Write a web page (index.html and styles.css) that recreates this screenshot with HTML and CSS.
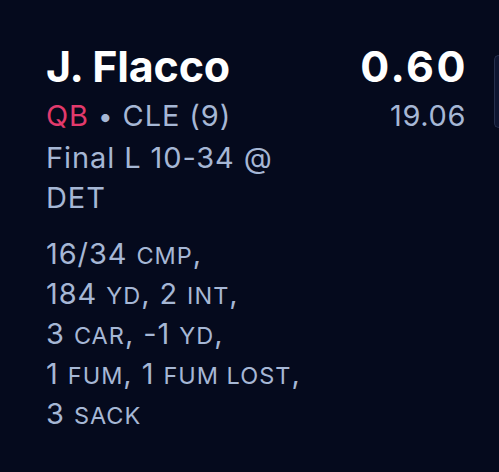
FILE: index.html
```html
<!DOCTYPE html>
<html>
<head>
<meta charset="utf-8">
<link rel="stylesheet" href="styles.css">
</head>
<body>
<div class="track">
  <div class="card">
    <div class="info">
      <div class="name">J. Flacco</div>
      <div class="meta"><span class="pos">QB</span> <span class="dot">•</span> CLE (9)</div>
      <div class="game">
        <span class="line">Final L 10-34 @</span>
        <span class="line">DET</span>
      </div>
      <div class="stats">
        <span class="line">16/34 <span class="sc">CMP</span>,</span>
        <span class="line">184 <span class="sc">YD</span>, 2 <span class="sc">INT</span>,</span>
        <span class="line">3 <span class="sc">CAR</span>, -1 <span class="sc">YD</span>,</span>
        <span class="line">1 <span class="sc">FUM</span>, 1 <span class="sc">FUM LOST</span>,</span>
        <span class="line">3 <span class="sc">SACK</span></span>
      </div>
    </div>
    <div class="score">
      <div class="points">0.60</div>
      <div class="proj">19.06</div>
    </div>
  </div>
  <div class="peek"></div>
</div>
</body>
</html>
```

FILE: styles.css
```css
html, body {
  margin: 0;
  padding: 0;
  background: #050a1d;
  overflow: hidden;
}
body {
  width: 499px;
  height: 472px;
  font-family: Inter, "Noto Sans", sans-serif;
}
.track {
  display: flex;
  gap: 8px;
  overflow: hidden;
}
.card {
  flex: 0 0 486px;
  box-sizing: border-box;
  display: flex;
  justify-content: space-between;
  padding: 41px 20px 0 46px;
}
.name {
  font-size: 43px;
  line-height: 50px;
  font-weight: 700;
  color: #ffffff;
  letter-spacing: -0.2px;
}
.meta, .game, .stats, .proj {
  font-size: 29px;
  line-height: 40px;
  color: #a6b7d5;
  letter-spacing: 0.9px;
}
.meta {
  margin-top: 5px;
  margin-bottom: 2px;
}
.pos {
  color: #e23a6c;
}
.dot {
  font-size: 26px;
  line-height: 1;
}
.line {
  display: block;
  white-space: nowrap;
}
.stats {
  margin-top: 16px;
}
.sc {
  font-size: 23.5px;
  line-height: 1;
  letter-spacing: 1px;
}
.score {
  text-align: right;
}
.points {
  font-size: 43px;
  line-height: 50px;
  font-weight: 700;
  color: #ffffff;
  letter-spacing: 2.5px;
  margin-right: -2px;
}
.proj {
  margin-top: 5px;
  letter-spacing: 0.6px;
  margin-right: 0;
}
.peek {
  flex: 0 0 5px;
  height: 73px;
  margin-top: 55px;
  box-sizing: border-box;
  background: #0e1530;
  border: 1px solid #262f4c;
  border-right: none;
  border-radius: 12px 0 0 12px;
}
```
